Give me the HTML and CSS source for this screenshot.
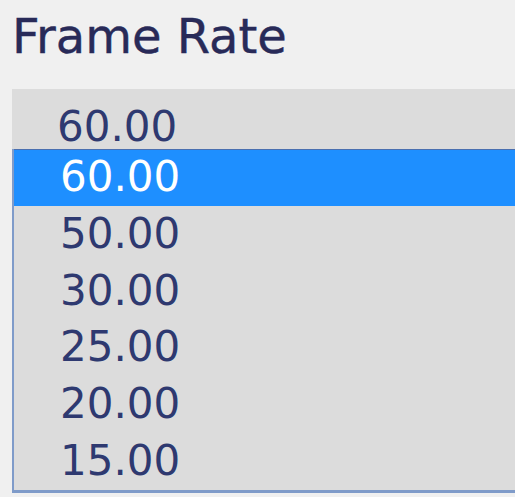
FILE: index.html
```html
<!DOCTYPE html>
<html lang="en">

<head>
    <meta charset="UTF-8">
    <meta name="viewport" content="width=device-width, initial-scale=1.0">
    <title>Frame Rate</title>
    <link rel="stylesheet" href="styles.css">
</head>

<body>
    <header class="title">Frame Rate</header>

    <main class="picker">
        <div class="current">60.00</div>
        <ul class="list">
            <li class="item selected">60.00</li>
            <li class="item">50.00</li>
            <li class="item">30.00</li>
            <li class="item">25.00</li>
            <li class="item">20.00</li>
            <li class="item">15.00</li>
        </ul>
    </main>
</body>

</html>
```

FILE: styles.css
```css
html,
body {
    margin: 0px;
    padding: 0px;
}

body {
    background-color: #f0f0f0;
    font-family: "DejaVu Sans", sans-serif;
    overflow: hidden;
}

.title {
    height: 89px;
    box-sizing: border-box;
    padding-top: 6px;
    padding-left: 12px;
    font-size: 48px;
    line-height: 60px;
    color: #282a58;
    -webkit-text-stroke: 0.4px #282a58;
}

.picker {
    margin-left: 12px;
    color: #2e3970;
    font-size: 42px;
}

.current {
    height: 60px;
    box-sizing: border-box;
    padding-top: 13px;
    padding-left: 45px;
    line-height: 50px;
    background-color: #dcdcdc;
}

.list {
    margin: 0px;
    padding: 0px;
    list-style: none;
    background-color: #dcdcdc;
    border-left: 2px solid #7f9bc9;
    border-bottom: 3px solid #7f9bc9;
}

.item {
    height: 56.8px;
    line-height: 56.8px;
    padding-left: 46px;
}

.selected {
    background-color: #1e8fff;
    color: #ffffff;
    box-shadow: inset 0 1px 0 #4a6fb0;
}
```
